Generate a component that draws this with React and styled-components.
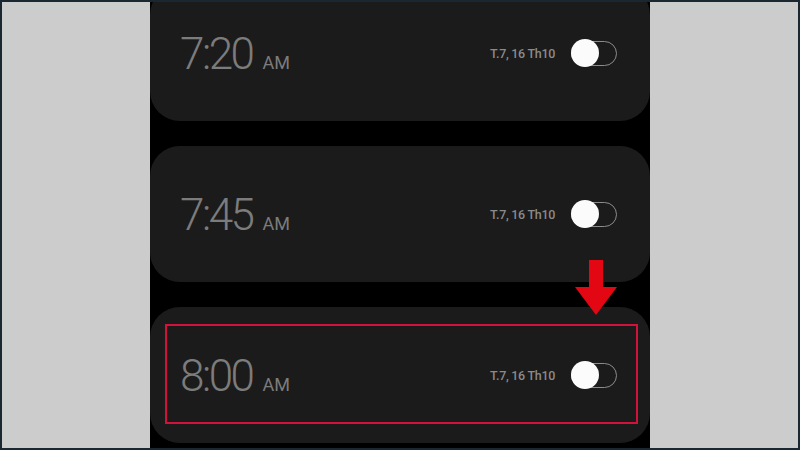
import React from "react"
import styled, { createGlobalStyle } from "styled-components"

const GlobalStyle = createGlobalStyle`
  html, body {
    margin: 0;
    padding: 0;
    background: #1a2630;
  }
`

const alarms = [
  { time: "7:20", date: "T.7, 16 Th10" },
  { time: "7:45", date: "T.7, 16 Th10" },
  { time: "8:00", date: "T.7, 16 Th10", marked: true },
]

const App = () => {
  return (
    <>
      <GlobalStyle />
      <Frame>
        <Side />
        <Column>
          {alarms.map((a) => (
            <Card key={a.time}>
              <Time>
                <Digits>{a.time}</Digits>
                <Meridiem>AM</Meridiem>
              </Time>
              <Right>
                <DateLabel>{a.date}</DateLabel>
                <Toggle>
                  <Knob />
                </Toggle>
              </Right>
              {a.marked && (
                <>
                  <Highlight />
                  <Arrow viewBox="0 0 42 55">
                    <path d="M14 0 H28 V27 H42 L21 55 L0 27 H14 Z" fill="#e30613" />
                  </Arrow>
                </>
              )}
            </Card>
          ))}
        </Column>
        <Side />
      </Frame>
    </>
  )
}

const Frame = styled.div`
  width: 796px;
  height: 446px;
  border: 2px solid #1a2630;
  display: grid;
  grid-template-columns: 148px 500px 148px;
  background: #cccccc;
  overflow: hidden;
`

const Side = styled.div`
  background: #cccccc;
`

const Column = styled.div`
  background: #000;
  display: flex;
  flex-direction: column;
  gap: 25px;
  margin-top: -17px;
  font-family: Roboto, "Liberation Sans", sans-serif;
`

const Card = styled.div`
  position: relative;
  height: 136px;
  flex-shrink: 0;
  border-radius: 30px;
  background: #1b1b1b;
  display: flex;
  align-items: center;
  justify-content: space-between;
  padding: 0 33px 0 30px;
`

const Time = styled.div`
  display: flex;
  align-items: baseline;
  gap: 10px;
  color: #7c7c7c;
  padding-top: 2px;
`

const Digits = styled.span`
  font-size: 44px;
  font-weight: 300;
  letter-spacing: -2.5px;
`

const Meridiem = styled.span`
  font-size: 18px;
  font-weight: 400;
`

const Right = styled.div`
  display: flex;
  align-items: center;
  gap: 16px;
`

const DateLabel = styled.span`
  font-size: 12.5px;
  font-weight: 500;
  color: #8a8a8a;
  letter-spacing: -0.3px;
`

const Toggle = styled.div`
  position: relative;
  width: 46px;
  height: 25px;
  box-sizing: border-box;
  border: 1.5px solid #8c8c8c;
  border-radius: 13px;
`

const Knob = styled.div`
  position: absolute;
  left: -1.5px;
  top: 50%;
  width: 28px;
  height: 28px;
  margin-top: -14px;
  border-radius: 50%;
  background: #fbfbfb;
`

const Highlight = styled.div`
  position: absolute;
  top: 17px;
  bottom: 19px;
  left: 15px;
  right: 12px;
  border: 2px solid #d3123c;
  pointer-events: none;
`

const Arrow = styled.svg`
  position: absolute;
  left: 425px;
  top: -47px;
  width: 42px;
  height: 55px;
`

export default App
